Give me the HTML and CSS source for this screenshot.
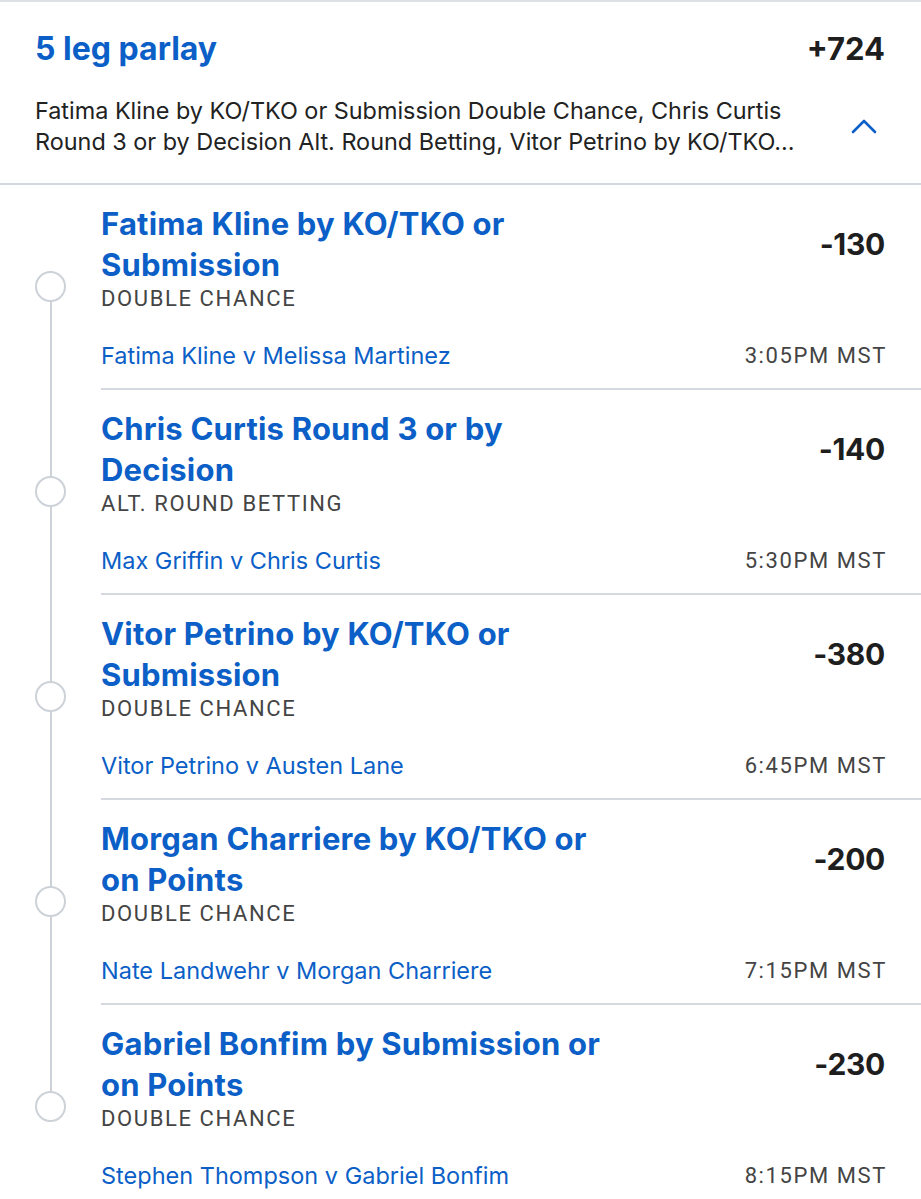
FILE: index.html
```html
<!DOCTYPE html>
<html lang="en">
<head>
<meta charset="utf-8">
<title>5 leg parlay</title>
<link rel="stylesheet" href="styles.css">
</head>
<body>
<div class="card">
  <header class="head">
    <div class="head-row">
      <h1 class="head-title">5 leg parlay</h1>
      <div class="head-odds">+724</div>
    </div>
    <div class="summary-row">
      <p class="summary">Fatima Kline by KO/TKO or Submission Double Chance, Chris Curtis Round 3 or by Decision Alt. Round Betting, Vitor Petrino by KO/TKO...</p>
      <svg class="chevron" width="26" height="15" viewBox="0 0 26 15"><path d="M2 13 L13 2 L24 13" fill="none" stroke="#0b5fc7" stroke-width="2.6" stroke-linecap="round" stroke-linejoin="round"/></svg>
    </div>
  </header>

  <div class="legs">
    <div class="leg first">
      <div class="rail"><span class="seg seg-top"></span><span class="dot"></span><span class="seg seg-bottom"></span></div>
      <div class="leg-body">
        <div class="leg-top">
          <div class="leg-title">Fatima Kline by KO/TKO or Submission</div>
          <div class="leg-odds">-130</div>
        </div>
        <div class="leg-type">DOUBLE CHANCE</div>
        <div class="leg-foot">
          <div class="leg-match">Fatima Kline v Melissa Martinez</div>
          <div class="leg-time">3:05PM MST</div>
        </div>
      </div>
    </div>

    <div class="leg">
      <div class="rail"><span class="seg seg-top"></span><span class="dot"></span><span class="seg seg-bottom"></span></div>
      <div class="leg-body">
        <div class="leg-top">
          <div class="leg-title">Chris Curtis Round 3 or by Decision</div>
          <div class="leg-odds">-140</div>
        </div>
        <div class="leg-type">ALT. ROUND BETTING</div>
        <div class="leg-foot">
          <div class="leg-match">Max Griffin v Chris Curtis</div>
          <div class="leg-time">5:30PM MST</div>
        </div>
      </div>
    </div>

    <div class="leg">
      <div class="rail"><span class="seg seg-top"></span><span class="dot"></span><span class="seg seg-bottom"></span></div>
      <div class="leg-body">
        <div class="leg-top">
          <div class="leg-title">Vitor Petrino by KO/TKO or Submission</div>
          <div class="leg-odds">-380</div>
        </div>
        <div class="leg-type">DOUBLE CHANCE</div>
        <div class="leg-foot">
          <div class="leg-match">Vitor Petrino v Austen Lane</div>
          <div class="leg-time">6:45PM MST</div>
        </div>
      </div>
    </div>

    <div class="leg">
      <div class="rail"><span class="seg seg-top"></span><span class="dot"></span><span class="seg seg-bottom"></span></div>
      <div class="leg-body">
        <div class="leg-top">
          <div class="leg-title">Morgan Charriere by KO/TKO or on Points</div>
          <div class="leg-odds">-200</div>
        </div>
        <div class="leg-type">DOUBLE CHANCE</div>
        <div class="leg-foot">
          <div class="leg-match">Nate Landwehr v Morgan Charriere</div>
          <div class="leg-time">7:15PM MST</div>
        </div>
      </div>
    </div>

    <div class="leg last">
      <div class="rail"><span class="seg seg-top"></span><span class="dot"></span><span class="seg seg-bottom"></span></div>
      <div class="leg-body">
        <div class="leg-top">
          <div class="leg-title">Gabriel Bonfim by Submission or on Points</div>
          <div class="leg-odds">-230</div>
        </div>
        <div class="leg-type">DOUBLE CHANCE</div>
        <div class="leg-foot">
          <div class="leg-match">Stephen Thompson v Gabriel Bonfim</div>
          <div class="leg-time">8:15PM MST</div>
        </div>
      </div>
    </div>
  </div>
</div>
</body>
</html>
```

FILE: styles.css
```css
html, body {
  margin: 0;
  padding: 0;
  background: #ffffff;
}

body {
  font-family: "Inter", "Liberation Sans", sans-serif;
  color: #1e1e1e;
  width: 921px;
  overflow: hidden;
}

.card {
  border-top: 2px solid #dde1e5;
}

.head {
  padding: 0 36px 0 35px;
  border-bottom: 2px solid #d3d9de;
}

.head-row {
  display: flex;
  justify-content: space-between;
  align-items: center;
  padding-top: 27px;
  height: 40px;
}

.head-title {
  margin: 0;
  font-size: 32px;
  font-weight: 700;
  color: #0b5fc7;
  line-height: 40px;
}

.head-odds {
  font-size: 31px;
  font-weight: 700;
  color: #1e1e1e;
  line-height: 40px;
}

.summary-row {
  display: flex;
  align-items: center;
  justify-content: space-between;
  padding-top: 26px;
  padding-bottom: 26px;
}

.summary {
  margin: 0;
  width: 780px;
  font-size: 23.4px;
  line-height: 31px;
  color: #222222;
}

.chevron {
  display: block;
  margin-right: 8px;
}

.legs {
  display: flex;
  flex-direction: column;
}

.leg {
  display: flex;
}

.rail {
  width: 101px;
  flex: none;
  display: flex;
  flex-direction: column;
  align-items: center;
}

.rail .seg {
  flex: 1;
  width: 2px;
  background: #cdd2d8;
}

.leg.first .seg-top,
.leg.last .seg-bottom {
  background: transparent;
}

.dot {
  width: 27px;
  height: 27px;
  border: 2px solid #cdd2d8;
  border-radius: 50%;
  flex: none;
  background: #fff;
  margin-top: -3px;
}

.leg-body {
  flex: 1;
  padding: 18px 36px 19px 0;
  border-bottom: 2px solid #d3d9de;
}

.leg-top {
  display: flex;
  align-items: center;
  justify-content: space-between;
}

.leg-title {
  width: 530px;
  font-size: 31px;
  font-weight: 700;
  line-height: 41px;
  color: #0b5fc7;
  letter-spacing: 0.2px;
}

.leg-odds {
  font-size: 30px;
  font-weight: 700;
  color: #1e1e1e;
  letter-spacing: -0.3px;
}

.leg-type {
  font-family: "Roboto", "Liberation Sans", sans-serif;
  font-size: 22px;
  line-height: 26px;
  letter-spacing: 1.6px;
  color: #444444;
  padding-top: 1px;
}

.leg-foot {
  display: flex;
  justify-content: space-between;
  align-items: center;
  margin-top: 29px;
  height: 28px;
}

.leg-match {
  font-size: 23.5px;
  color: #0b5fc7;
}

.leg-time {
  font-family: "Roboto", "Liberation Sans", sans-serif;
  font-size: 22px;
  letter-spacing: 1.6px;
  color: #444444;
  margin-right: -2px;
}
```
